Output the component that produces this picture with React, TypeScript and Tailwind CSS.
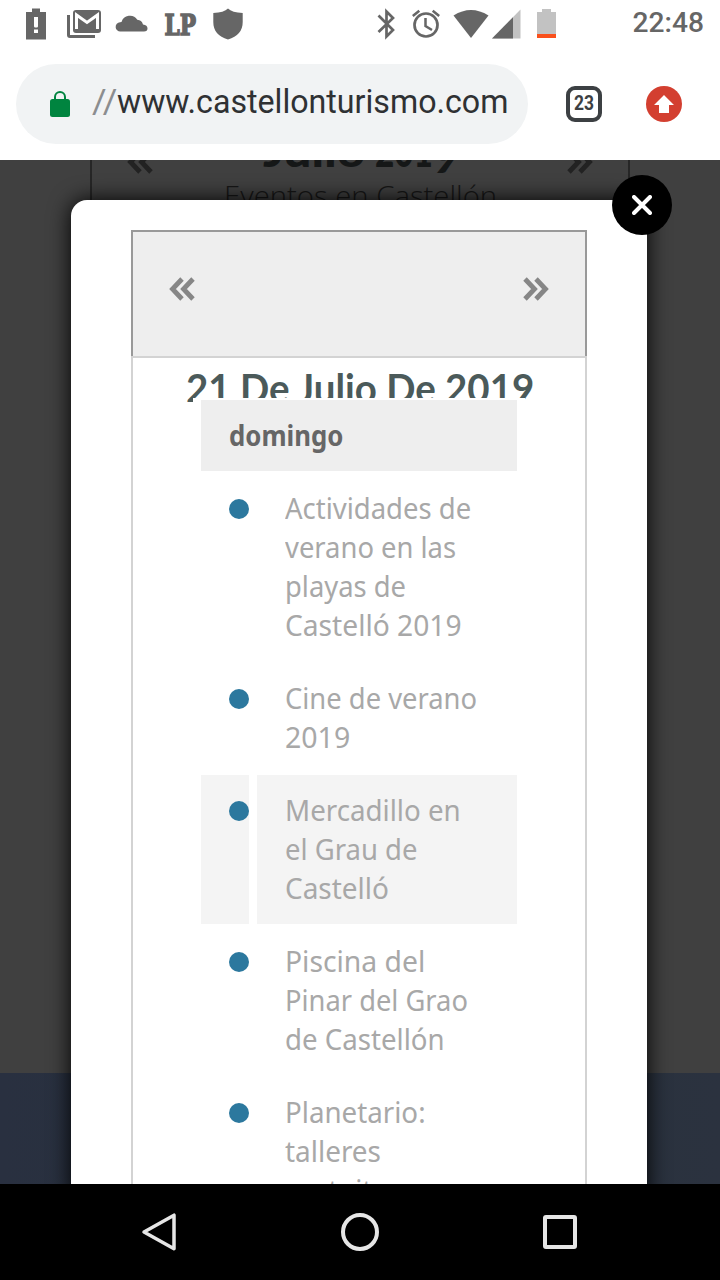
import React, {useLayoutEffect, useRef, useState} from "react";

interface FitTextProps {
    text: string
    width: number
    className?: string
}

// condenses or widens a line of text to the given width
const FitText = ({text, width, className}: FitTextProps) => {
    const ref = useRef<HTMLSpanElement>(null);
    const [scale, setScale] = useState(1);

    useLayoutEffect(() => {
        if (ref.current) {
            setScale(width / ref.current.offsetWidth);
        }
    }, [text, width]);

    return <span ref={ref} style={{transform: `scaleX(${scale})`}}
                 className={`inline-block origin-left whitespace-pre ${className ?? ''}`}>{text}</span>;
};

interface EventItem {
    lines: [string, number][]
    active?: boolean
}

const events: EventItem[] = [
    {lines: [['Actividades de', 186], ['verano en las', 171], ['playas de', 121], ['Castelló 2019', 177]]},
    {lines: [['Cine de verano', 192], ['2019', 65]]},
    {lines: [['Mercadillo en', 176], ['el Grau de', 132], ['Castelló', 104]], active: true},
    {lines: [['Piscina del', 140], ['Pinar del Grao', 183], ['de Castellón', 160]]},
    {lines: [['Planetario:', 141], ['talleres', 96], ['gratuitos', 117]]},
];

const StatusBar = () => (
    <div className="h-12 shrink-0">
        <svg width="720" height="48" viewBox="0 0 720 48" fill="#666666">
            <path d="M26 12h6V8.500h8V12h6v27.500H26z"/>
            <path d="M34 17h4v9.500l-.7 1h-2.600l-.7-1zM34 29.500h4v3.500h-4z" fill="#fff"/>
            <path d="M67 15h3v20h25v3H70q-3 0-3-3z"/>
            <rect x="73" y="10" width="28" height="23" rx="3"/>
            <path d="M76.500 29V15l10.500 7.500L97.500 15v14" fill="none" stroke="#fff" strokeWidth="3"/>
            <path d="M120.500 31.500a4.600 4.600 0 0 1-.5-9.200q.800-.300 1.500-.300a8.800 8.800 0 0 1 15.800-2.300q4.500.300 5.700 4.800 4.500.700 4.500 4 0 3-3.500 3z"/>
            <text x="164.500" y="34.500" fontFamily="DejaVu Serif, serif" fontWeight="700" fontSize="28.500" textLength="31.500"
                  lengthAdjust="spacingAndGlyphs" stroke="#666666" strokeWidth="1.600">LP</text>
            <path d="M228 8.500q4 4 14.700 4.500v9c0 9-5 14.500-14.700 17.500-9.700-3-14.700-8.500-14.700-17.500v-9Q224 12.500 228 8.500z"/>
            <path d="M378.500 15.500 393 30l-6.500 6.500V11.500L393 18l-14.500 14" fill="none" stroke="#666666" strokeWidth="2.700"/>
            <circle cx="426" cy="25" r="11.500" fill="none" stroke="#666666" strokeWidth="2.700"/>
            <path d="M425.500 18v8l6.500 4M412.800 16l6.500-5.300M439.200 16l-6.500-5.300" fill="none" stroke="#666666" strokeWidth="2.500"/>
            <path d="M453.500 15.500q17.500-11 35 0L471 38z"/>
            <path d="M492 38.500 520.500 9.500v29z" fill="#c2c2c2"/>
            <path d="M492 38.500 513 17.200v21.300z"/>
            <path d="M537 12h5V9h9v3h5v22h-19z" fill="#c2c2c2"/>
            <path d="M537 34h19v4h-19z" fill="#f9501c"/>
            <text x="632.500" y="32" fontFamily="Roboto, sans-serif" fontWeight="500" fontSize="28.500" textLength="71.500"
                  lengthAdjust="spacingAndGlyphs">22:48</text>
        </svg>
    </div>
);

const AddressBar = () => (
    <div className="flex h-28 shrink-0 items-center pl-4">
        <div className="flex h-20 w-[512px] items-center rounded-full bg-[#f1f3f4] pl-[34px]">
            <svg width="20" height="26" viewBox="0 0 20 26" className="mr-[22px] shrink-0">
                <rect y="8" width="20" height="18" rx="2.500" fill="#00843f"/>
                <path d="M5 9V6a5 5 0 0 1 10 0v3" fill="none" stroke="#00843f" strokeWidth="2"/>
            </svg>
            <div className="-mt-1 flex h-10 font-['Roboto'] text-[32.500px] leading-10">
                <div className="w-[25px]"><FitText text="//" width={25} className="text-[#8b8d8f]"/></div>
                <FitText text="www.castellonturismo.com" width={391} className="text-[#2f3133]"/>
            </div>
        </div>
        <div
            className="ml-[38px] flex size-9 items-center justify-center rounded-[9px] border-4 border-[#3c4043] font-['Roboto'] text-[21px] font-bold text-[#3c4043]">
            <span className="scale-x-[0.83]">23</span>
        </div>
        <svg width="36" height="36" viewBox="0 0 36 36" className="ml-11">
            <circle cx="18" cy="18" r="18" fill="#d33f30"/>
            <path d="M18 9 28 19h-5v8H13v-8H8z" fill="#fff"/>
        </svg>
    </div>
);

const Chevrons = ({className}: { className?: string }) => (
    <svg width="26" height="24" viewBox="0 0 26 24" fill="none" stroke="currentColor" strokeWidth="4.800"
         className={className}>
        <path d="M13 2 3.500 12l9.500 10M24 2l-9.500 10L24 22"/>
    </svg>
);

const Backdrop = () => (
    <div className="flex h-full flex-col bg-[#404040]">
        <div className="relative mx-auto h-[913px] w-[540px] border-x-2 border-[#262626]">
            <div className="flex h-20 justify-between overflow-hidden px-[35px]">
                <Chevrons className="-mt-2.5 text-[#222]"/>
                <Chevrons className="-mt-2.5 rotate-180 text-[#222]"/>
            </div>
            <div
                className="absolute left-[171px] -top-[34px] font-['Lato'] text-[43px] leading-[50px] font-black text-[#151717]">
                <div className="flex">
                    <div className="w-[102px]"><FitText text="Julio" width={102}/></div>
                    <div className="ml-[10px] w-[58px]"><FitText text="201" width={58}/></div>
                    <div className="relative top-[6px]"><FitText text="9" width={25}/></div>
                </div>
            </div>
            <div
                className="absolute left-[132px] top-[14px] font-['Open_Sans'] text-[28px] leading-[42px] font-light text-[#171717]">
                <FitText text="Eventos en Castellón" width={273}/>
            </div>
        </div>
        <div className="flex-1 bg-linear-to-r from-[#293040] via-[#27323c] to-[#2b323f]"/>
    </div>
);

const EventRow = ({lines, active}: EventItem) => (
    <div className="flex gap-2">
        <div className={`w-12 pt-[26px] pl-7 ${active ? 'bg-[#f4f4f4]' : ''}`}>
            <div className="size-5 rounded-full bg-[#2c789e]"/>
        </div>
        <div className={`w-[260px] py-4 pl-7 text-[28.500px] leading-[39px] text-[#a8a8a8] ${active ? 'bg-[#f4f4f4]' : ''}`}>
            {lines.map(([text, width]) => <div key={text} className="h-[39px]">
                <FitText text={text} width={width}/>
            </div>)}
        </div>
    </div>
);

const CalendarModal = () => (
    <div
        className="absolute left-[71px] top-10 h-[1000px] w-[576px] rounded-t-[16px] bg-white px-[60px] pt-[30px] font-['Noto_Sans'] shadow-[0_0_22px_#000]">
        <div
            className="flex h-[126px] w-[456px] items-center justify-between border-2 border-b-0 border-[#999] bg-[#eee] px-9 pb-2.5 text-[#868686]">
            <Chevrons/>
            <Chevrons className="rotate-180"/>
        </div>
        <div className="h-[850px] w-[456px] border-2 border-[#d3d3d3]">
            <div className="h-[44px] overflow-hidden pl-[53px] font-['Lato'] text-[41px] leading-[60px] font-bold text-[#4b5a5a]">
                <FitText text="21 De Julio De 2019" width={348}/>
            </div>
            <div className="relative -mt-1 ml-[60px] flex w-[332px] flex-col gap-0.5 bg-white px-2 pt-0.5">
                <div className="h-[71px] bg-[#eee] pt-4 pl-7 text-[28.500px] leading-[39px] font-bold text-[#666]">
                    <FitText text="domingo" width={114}/>
                </div>
                {events.map((event, index) => <EventRow key={index} {...event}/>)}
            </div>
        </div>
        <div className="absolute -top-[25px] -right-[25px] flex size-[60px] items-center justify-center rounded-full bg-black">
            <svg width="20" height="20" viewBox="0 0 20 20" stroke="#fff" strokeWidth="4" strokeLinecap="round">
                <path d="M2 2 18 18M18 2 2 18"/>
            </svg>
        </div>
    </div>
);

const NavBar = () => (
    <div className="flex h-24 shrink-0 items-center justify-between bg-black px-[140px]">
        <svg width="40" height="40" viewBox="0 0 40 40" fill="none" stroke="#e6e6e6" strokeWidth="3.500"
             strokeLinejoin="round">
            <path d="M34 3.200V36.800L4 20z"/>
        </svg>
        <svg width="40" height="40" viewBox="0 0 40 40" fill="none" stroke="#e6e6e6" strokeWidth="4">
            <circle cx="20" cy="20" r="17"/>
        </svg>
        <svg width="40" height="40" viewBox="0 0 40 40" fill="none" stroke="#e6e6e6" strokeWidth="4">
            <rect x="5" y="5" width="30" height="30" rx="1"/>
        </svg>
    </div>
);

const App = () => {
    return <div className="flex h-[1280px] w-[720px] flex-col overflow-hidden bg-white">
        <StatusBar/>
        <AddressBar/>
        <div className="relative min-h-0 flex-1 overflow-hidden">
            <Backdrop/>
            <CalendarModal/>
        </div>
        <NavBar/>
    </div>;
};

export default App;
